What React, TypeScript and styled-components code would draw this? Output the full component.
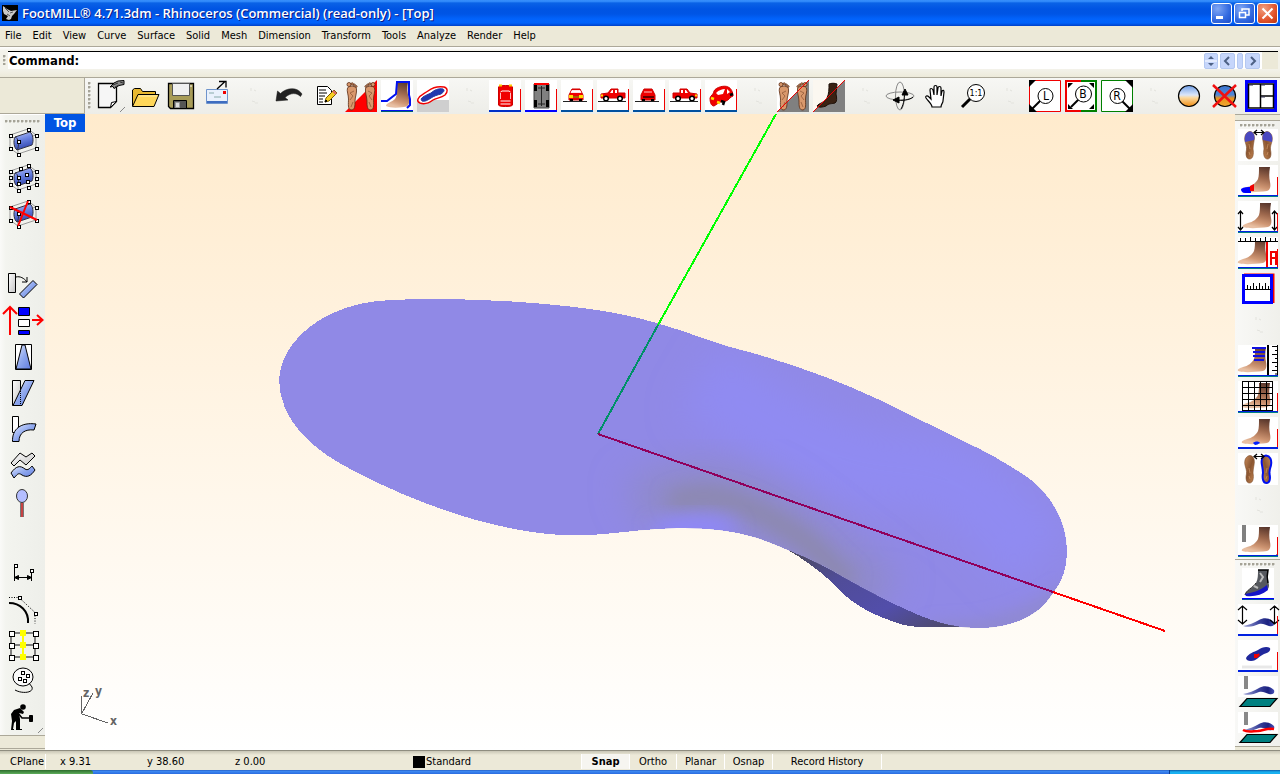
import React from "react";
import styled, { createGlobalStyle } from "styled-components";

const Global = createGlobalStyle`
  * { box-sizing: border-box; }
  body { margin: 0; background: #ece9d8; }
  button, input { font: inherit; color: inherit; border: 0; padding: 0; margin: 0; background: none; }
`;

const ui = `"DejaVu Sans Condensed", "DejaVu Sans", sans-serif`;

const Window = styled.div`
  display: flex;
  flex-direction: column;
  min-height: 100vh;
  font-family: ${ui};
  font-stretch: condensed;
  font-size: 11px;
  color: #000;
  background: #ece9d8;
`;

const TitleBar = styled.header`
  display: flex;
  align-items: center;
  height: 26px;
  padding: 0 2px;
  gap: 4px;
  background: linear-gradient(#2f86f6 0, #3a93ff 1px, #0a62e6 3px, #0054e3 9px, #0055e5 14px, #0263fc 19px, #0062fa 23px, #0040c8 26px);
`;

const TitleText = styled.h1`
  flex: 1;
  margin: 0;
  font-family: "Open Sans", "Noto Sans", sans-serif;
  font-size: 13px;
  line-height: 24px;
  font-weight: 600;
  font-stretch: normal;
  color: #fff;
  text-shadow: 1px 1px 0 #0a1883;
  white-space: nowrap;
`;

const CaptionButton = styled.button<{ $close?: boolean }>`
  display: flex;
  width: 21px;
  height: 21px;
  margin-left: -2px;
  border: 1px solid #fff;
  border-radius: 3px;
  background: ${(p) =>
    p.$close
      ? "radial-gradient(circle at 30% 25%, #f0a080, #e2542c 60%, #b83410)"
      : "radial-gradient(circle at 30% 25%, #7fa6f4, #3269e0 60%, #1c4cc8)"};
`;

const MenuBar = styled.nav`
  display: flex;
  align-items: center;
  height: 21px;
  gap: 11px;
  padding: 0 5px 1px;
  border-bottom: 1px solid #aca899;
`;

const MenuItem = styled.button`
  line-height: 16px;
`;

const CommandRow = styled.section`
  display: flex;
  height: 31px;
  padding: 4px 2px 8px 3px;
  gap: 2px;
  background: linear-gradient(#fff 0, #f3f2ea 4px, #f3f2ea 22px, #ece9d8 31px);
  border-bottom: 1px solid #aca899;
`;

const CommandBox = styled.div`
  flex: 1;
  display: flex;
  align-items: center;
  border-top: 1px solid #000;
  background: #fff;
  font-weight: 700;
  font-size: 13px;
  line-height: 16px;
`;

const CommandLabel = styled.label`
  padding-left: 1px;
`;

const CommandInput = styled.input`
  flex: 1;
  min-width: 0;
  height: 16px;
  outline: 0;
`;

const ScrollGroup = styled.div`
  display: flex;
  align-self: stretch;
  align-items: center;
  gap: 2px;
  padding-right: 18px;
  background: linear-gradient(to left, #ece9d8 16px, #fff 16px);
`;

const ScrollButton = styled.button<{ $w: number }>`
  display: flex;
  width: ${(p) => p.$w}px;
  height: 16px;
  border: 1px solid #b4c8f0;
  border-radius: 2px;
  background: #c6d6fb;
`;

const Grip = styled.i<{ $row?: boolean }>`
  flex: none;
  ${(p) => (p.$row ? "height: 3px; margin: 0 5px;" : "width: 3px; margin: 4px 0;")}
  background-image: radial-gradient(circle at 1px 1px, #a5a397 1px, transparent 2px);
  background-size: ${(p) => (p.$row ? "4px 3px" : "3px 4px")};
`;

const TopRow = styled.section`
  display: flex;
  height: 36px;
`;

const Blank = styled.div`
  width: 85px;
  border-right: 1px solid #aca899;
  border-bottom: 1px solid #aca899;
  background: #ece9d8;
`;

const TopTools = styled.div`
  flex: 1;
  display: flex;
  background: linear-gradient(#f7f7f4, #ededE8);
  padding-left: 3px;
`;

const ToolButton = styled.button<{ $side?: boolean }>`
  flex: none;
  display: flex;
  align-items: center;
  justify-content: center;
  width: ${(p) => (p.$side ? 42 : 36)}px;
  height: 36px;
  svg { display: block; overflow: visible; }
`;

const Gap = styled.span`
  flex: none;
  display: flex;
  align-items: center;
  justify-content: center;
  width: 36px;
  height: 36px;
`;

const Main = styled.main`
  flex: 1;
  display: flex;
`;

const LeftColumn = styled.aside`
  width: 45px;
  display: flex;
  flex-direction: column;
  background: #ece9d8;
`;

const LeftTools = styled.div`
  display: flex;
  flex-direction: column;
  align-items: center;
  padding-top: 5px;
  border-top: 1px solid #fff;
  border-bottom: 1px solid #aca899;
  background: linear-gradient(to right, #fafaf8 0, #f3f4ef 6px, #eeefea 44px);
  ${Grip} { width: 36px; }
`;

const LeftFoot = styled.div`
  height: 13px;
  border-bottom: 1px solid #aca899;
`;

const RightColumn = styled.aside`
  width: 45px;
  display: flex;
  flex-direction: column;
  background: #ece9d8;
  border-top: 1px solid #aca899;
`;

const RightTools = styled.div<{ $first?: boolean }>`
  display: flex;
  flex-direction: column;
  align-items: center;
  padding-top: 3px;
  margin-top: ${(p) => (p.$first ? 5 : 0)}px;
  border-top: 1px solid #aca899;
  background: linear-gradient(to right, #f8f8f6, #f0f0eb);
  ${Grip} { width: 36px; }
  &:last-child { border-bottom: 1px solid #aca899; }
`;

const Viewport = styled.section`
  position: relative;
  flex: 1;
  min-width: 0;
  display: flex;
  background: linear-gradient(#ffebcd, #fff);
  > svg { display: block; width: 100%; height: 636px; }
`;

const ViewTab = styled.button`
  position: absolute;
  left: 0;
  top: 0;
  width: 40px;
  height: 18px;
  background: #0054e3;
  color: #fff;
  font-weight: 700;
  font-size: 13px;
  line-height: 16px;
`;

const StatusBar = styled.footer`
  display: flex;
  height: 20px;
  padding: 3px 0 1px;
  border-top: 1px solid #8f8d80;
  background: linear-gradient(#c9c6b6, #ece9d8 4px);
`;

const Cell = styled.span<{ $w?: number; $line?: boolean; $pad?: number }>`
  display: flex;
  align-items: center;
  width: ${(p) => p.$w}px;
  padding-left: ${(p) => p.$pad ?? 0}px;
  border-right: ${(p) => (p.$line ? "1px solid #fff" : "0")};
  line-height: 16px;
  white-space: nowrap;
`;

const Swatch = styled.i`
  width: 12px;
  height: 12px;
  margin-right: 1px;
  background: #000;
`;

const Toggle = styled.button<{ $w: number; $on?: boolean }>`
  width: ${(p) => p.$w}px;
  border-right: 1px solid #fff;
  line-height: 16px;
  font-weight: ${(p) => (p.$on ? 700 : 400)};
  background: ${(p) => (p.$on ? "#f6f5f0" : "transparent")};
`;

const TaskStrip = styled.div`
  display: flex;
  height: 4px;
  background: linear-gradient(#1c50b8 0, #3f8cf3 1px, #2a6be0 4px);
`;

const StartEdge = styled.i`
  width: 93px;
  background: linear-gradient(#2c6b2c, #5fae5c);
  border-radius: 0 3px 0 0;
`;

const TrayEdge = styled.i`
  width: 111px;
  margin-left: auto;
  border-left: 1px solid #0a3a90;
  background: linear-gradient(#0b5aa8, #18b0f0 2px);
`;

type Kids = { children?: React.ReactNode };
const I32 = ({ children }: Kids) => (
  <svg width="32" height="32" viewBox="0 0 32 32" fill="none" stroke="#000" aria-hidden="true">{children}</svg>
);
const I40 = ({ children }: Kids) => (
  <svg width="40" height="32" viewBox="0 0 40 32" fill="none" stroke="#000" aria-hidden="true">{children}</svg>
);

const Defs = () => (
  <svg width="0" height="0" style={{ position: "absolute" }} aria-hidden="true">
    <defs>
      <linearGradient id="skin" x1="0.9" y1="0" x2="0.6" y2="1">
        <stop offset="0" stopColor="#55342a" /><stop offset="0.45" stopColor="#9c674c" /><stop offset="0.8" stopColor="#cf9673" /><stop offset="1" stopColor="#e8bfa2" />
      </linearGradient>
      <linearGradient id="sole" x1="0" y1="0" x2="1" y2="1">
        <stop offset="0" stopColor="#c88b5a" /><stop offset="0.5" stopColor="#8a5530" /><stop offset="1" stopColor="#c98a55" />
      </linearGradient>
      <linearGradient id="steel" x1="0" y1="0" x2="1" y2="1">
        <stop offset="0" stopColor="#e4ebff" /><stop offset="0.5" stopColor="#8fa8ee" /><stop offset="1" stopColor="#5f7be0" />
      </linearGradient>
      <linearGradient id="tube" x1="0" y1="0" x2="0.3" y2="1">
        <stop offset="0" stopColor="#b8c6fa" /><stop offset="0.5" stopColor="#6a82e0" /><stop offset="1" stopColor="#3348b0" />
      </linearGradient>
      <linearGradient id="grey" x1="0" y1="0" x2="1" y2="1">
        <stop offset="0" stopColor="#fff" /><stop offset="1" stopColor="#c4c4c4" />
      </linearGradient>
      <linearGradient id="navy" x1="0" y1="0" x2="1" y2="0">
        <stop offset="0" stopColor="#a4a8d8" /><stop offset="0.5" stopColor="#3c449c" /><stop offset="0.8" stopColor="#1c2280" /><stop offset="1" stopColor="#4650b8" />
      </linearGradient>
      <linearGradient id="ball" x1="0" y1="0" x2="0" y2="1">
        <stop offset="0" stopColor="#6f9fe8" /><stop offset="0.45" stopColor="#dbe6fa" /><stop offset="0.58" stopColor="#fbd9a0" /><stop offset="1" stopColor="#f08c10" />
      </linearGradient>
      <linearGradient id="ball2" x1="0" y1="0" x2="0" y2="1">
        <stop offset="0" stopColor="#3c74cc" /><stop offset="0.45" stopColor="#4f86d8" /><stop offset="0.6" stopColor="#e8921c" /><stop offset="1" stopColor="#f0a830" />
      </linearGradient>
    </defs>
  </svg>
);

/* Small square control points used by the editing icons. */
const Pts = ({ at, s = 3 }: { at: number[][]; s?: number }) => (
  <g fill="#fff" stroke="#000" shapeRendering="crispEdges">
    {at.map(([x, y]) => <rect key={`${x}-${y}`} x={x - (s - 1) / 2} y={y - (s - 1) / 2} width={s} height={s} />)}
  </g>
);

const RED = "#f00000";
const BLUE = "#0000ff";

const Marks = () => (
  <I32><path d="M14 8v3M17 10l2 1M15 21l3 1M18 23h3" stroke="#e2e2dd" /></I32>
);

const NewDoc = () => (
  <I32>
    <path d="M5.500 3.500h18v18l-6 6h-12z" fill="#f6f6f6" strokeWidth="1.300" /><path d="M17.500 27.500l1-5 5-1z" fill="#fff" />
    <path d="M17 7l4-4 4-2 6-.5v4l-5 1-5 3-1-2z" fill="#8c8c8c" /><path d="M20 5l5-2m-3 4 4-2M27 2l3 1" stroke="#333" />
    <path d="M27 32l5-5" stroke="#888" />
  </I32>
);
const OpenFolder = () => (
  <I32>
    <path d="M3.500 26V10l2-1.500h6l2 3h13v4" fill="#e8b830" />
    <path d="M3.500 26.500L9 14.500h21l-5 12z" fill="#ffd75a" /><path d="M10 16h18" stroke="#ffefb0" />
  </I32>
);
const Floppy = () => (
  <I32>
    <path d="M3.500 3.500h25v25h-23l-2-2z" fill="#a89c58" strokeWidth="1.300" /><path d="M7.500 3.500h17v12h-17z" fill="#f0f0f0" stroke="#555" />
    <path d="M8.500 20.500h13v8h-13z" fill="#555" /><path d="M10.500 22.500h4v5h-4z" fill="#ddd" stroke="#999" /><path d="M26 5v2" stroke="#fff" />
  </I32>
);
const Mail = () => (
  <I32>
    <path d="M5.500 9.500h21v14h-21z" fill="#e9f1fc" stroke="#6f94cc" /><path d="M6 22h20" stroke="#3d6cc0" strokeWidth="2" />
    <path d="M8 13h5M13 17h7" stroke="#8aa" /><path d="M22 11h3v3h-3z" fill={RED} stroke="none" />
    <path d="M16 9l8-7.500M18 1.500h7v6" strokeWidth="1.300" />
  </I32>
);
const Undo = () => (
  <I32><path d="M3 21l1.500-10 3 2.500C13 8 24 6 29 14l-1.500 2.500c-4-4-10-4-15.500 1l3 2.500z" fill="#222" stroke="#111" strokeWidth=".5" /></I32>
);
const Notes = () => (
  <I32>
    <path d="M8.500 6.500h10l4 4v14h-14z" fill="#fff" /><path d="M10 10h7M10 13h8M10 16h6M10 19h4M10 22h4" /><path d="M16 22l1-4 8-8 3 3-8 8z" fill="#f7cf20" stroke="#7a5a00" />
    <path d="M24 11l3 3" stroke="#d66" strokeWidth="2" /><path d="M16 22l1-2 1 1z" fill="#000" />
  </I32>
);

const Sole = ({ x = 0, flip = false, tip = "", outline = "" }: { x?: number; flip?: boolean; tip?: string; outline?: string }) => (
  <g transform={flip ? `translate(${x + 10} 0) scale(-1 1)` : `translate(${x} 0)`}>
    <path d="M1 12C0 7 2 3 6 2.500c4 .5 5 5 4 9.500-.5 3-1 5-1 8 1 5 0 10-3.500 10S1.500 25 2.500 21C3 17 1.500 15 1 12z" fill="url(#sole)" stroke={outline || "#7a4a28"} strokeWidth={outline ? 2 : 0.6} />
    {tip && <path d="M1 13C0 7 2 3 6 2.500c4 .5 5 5 4.200 8.500z" fill={tip} stroke="none" />}
    <path d="M5 15l1 5M5 23l1 3" stroke="#d9a070" opacity=".6" />
  </g>
);
const Toes = ({ x, flip = false }: { x: number; flip?: boolean }) => (
  <g transform={flip ? `translate(${x + 12} 0) scale(-1 1)` : `translate(${x} 0)`} stroke="#5a2c14" strokeWidth=".8">
    <path d="M1.500 9c0-3 7-4 9-1 1 3-1 7-1 11 0 5 1 10-2.500 11-4 0-4-4-4-9 0-4-2-8-1.500-12z" fill="#d9986c" />
    <circle cx="9" cy="4.500" r="2" fill="#d9986c" /><circle cx="5.800" cy="4" r="1.200" fill="#d9986c" /><circle cx="3.600" cy="5" r="1" fill="#d9986c" /><circle cx="1.800" cy="6.500" r=".9" fill="#d9986c" />
    <path d="M4 11l4 2-3 3 3 4M5 22l2 5" stroke="#935a38" />
  </g>
);
const FeetRed = () => (
  <I32><path d="M0 32L32 0v32z" fill="#f00" stroke="none" /><Toes x={1} flip /><Toes x={19} /></I32>
);
const FootBlue = () => (
  <I32>
    <path d="M0 0h32v32H0z" fill="#fff" stroke="none" />
    <path d="M16 2h11c-1 6-1 11 1 16 1 6-1 9-5 9-7 1-14 1-18-1 0-3 6-4 9-7 3-4 2-12 2-17z" fill="url(#skin)" stroke="none" />
    <path d="M0 21h6l9-7 1-12h12v13l1 4v6l-3 3" stroke="#0010f0" strokeWidth="2" /><path d="M0 30.500h32" stroke="#0010f0" /><path d="M0 31.500h32" stroke="#006070" />
  </I32>
);
const InsoleRed = () => (
  <I32>
    <path d="M0 0h32v20H0z" fill="#fff" stroke="none" /><path d="M0 20h32v12H0z" fill="#cfcfcf" stroke="none" />
    <path d="M1 19c2-4 6-5 10-8 4-3 10-5 16-4 4 1 4 5 1 8-4 3-9 3-12 5-4 3-8 5-13 3-2-1-3-2-2-4z" fill="#fff" stroke={RED} strokeWidth="1.400" />
    <path d="M4 19c2-3 6-4 10-6 3-3 8-5 12-4 2 1 1 3-2 5-4 1-7 2-10 4-3 2-6 4-9 3z" fill="#2038b0" stroke="#2a3aa0" />
  </I32>
);

const CarCard = ({ children, line = "#0050a0" }: Kids & { line?: string }) => (
  <I32>
    <path d="M0 0h32v32H0z" fill="#fff" stroke="none" />{children}
    <path d="M31.500 9v21" stroke={RED} /><path d="M0 31h32" stroke={line} strokeWidth="2" />
  </I32>
);
const CarTop = () => (
  <CarCard line="#0030c8">
    <path d="M9.500 7c0-2 14-2 14 0v18c0 2-14 2-14 0z" fill={RED} stroke="#c00" />
    <path d="M11.500 12l1.500-1h7l1.500 1M11.500 21h10M11.500 24h10" stroke="#fff" /><path d="M11.500 13v6M21.500 13v6" stroke="#fbb" />
    <path d="M10 5.500h3M20 5.500h3" stroke="#fc0" strokeWidth="2" />
  </CarCard>
);
const CarUnder = () => (
  <CarCard line="#0000ff"><path d="M9 4h15v24H9z" fill="#808080" stroke="#444" /><path d="M9 4h15" stroke="#f00" strokeWidth="2" /><path d="M10.500 5v6M22.500 5v6M10.500 20v7M22.500 20v7" strokeWidth="3" /><path d="M16.500 6v20M13 8h7M13 24h7" stroke="#222" /></CarCard>
);
const CarFace = ({ back = false }: { back?: boolean }) => (
  <CarCard>
    <g transform="translate(-1 -1)">
      <path d="M10 14l2-4h8l2 4 1 2v5H9v-5z" fill={RED} stroke="#c00" />
      <path d={back ? "M12 13h8" : "M11 13.500h10l-1-2h-8z"} fill="#fff" stroke="#fff" strokeWidth=".8" /><path d="M11 18h11" stroke={back ? "#600" : "#a86000"} strokeWidth="2" />
      {!back && <path d="M9 16h4v3H9zM19 16h4v3h-4z" fill="#fd0" stroke="none" />}
      <path d="M10 21h3M19 21h3" strokeWidth="2" />
    </g>
    <path d="M2 21.500h24" stroke="#222" />
  </CarCard>
);
const CarSide = ({ flip = false }: { flip?: boolean }) => (
  <CarCard>
    <g transform={flip ? "translate(32 0) scale(-1 1)" : undefined}>
      <path d="M4 18v-4l7-1 3-4h7v4h7v5z" fill={RED} stroke="#c00" /><path d="M13 13l2-3h1v3zM18 10h2v3h-2z" fill="#fff" stroke="none" />
      <circle cx="9" cy="18.500" r="2.300" fill="#fff" strokeWidth="1.500" /><circle cx="23" cy="18.500" r="2.300" fill="#fff" strokeWidth="1.500" /><path d="M4 15.500h2" stroke="#fd0" strokeWidth="2" />
    </g>
    <path d="M1 21.500h28" stroke="#222" />
  </CarCard>
);
const CarTilt = () => (
  <CarCard>
    <path d="M5 18c1-3 4-4 4-7 2-4 11-6 14-4 3 1 5 5 5 9-3 1-4 4-7 5l-6 1-6 4c-3 0-4-4-4-8z" fill={RED} stroke="#c00" />
    <path d="M11 13c3-3 6-4 9-4l-2 5-5 1zM22 9l3 3-3 2z" fill="#fff" stroke="none" /><path d="M6 18l3 1M12 22l3 1" stroke="#fd0" strokeWidth="2.500" /><path d="M16 21l3 1-1 3M25 15l3-1" strokeWidth="2.500" />
  </CarCard>
);
const FeetGrey = () => (
  <I32><path d="M0 0h32v32H0z" fill="#fff" stroke="none" /><path d="M0 32L32 0v32z" fill="#808080" stroke="none" /><Toes x={1} flip /><Toes x={19} /><path d="M0 32L32 0" stroke={RED} /></I32>
);
const DarkFoot = () => (
  <I32>
    <path d="M0 0h32v32H0z" fill="#fbf7f0" stroke="none" /><path d="M0 32L32 0v32z" fill="#808080" stroke="none" />
    <path d="M16 4c2-1 6-1 8 0l-1 10c1 4 1 8-1 9-3 1-6 0-9 3-3 1-7 2-9 0 2-3 7-3 10-8 2-4 2-9 2-14z" fill="#3a2112" stroke="#1c0e06" /><path d="M0 32L32 0" stroke={RED} />
  </I32>
);
const Orbit = () => (
  <I32>
    <ellipse cx="15" cy="16" rx="14" ry="4" stroke="#888" /><ellipse cx="15" cy="16" rx="4.500" ry="14" stroke="#888" />
    <path d="M11 20c6 1 14 0 17-3M19 11c1 5 0 13-3 18" /><path d="M8 20l6-3v6zM20 9l-3 6 6 0z" fill="#000" />
  </I32>
);
const Hand = () => (
  <I32>
    <path d="M11 27c0-3-4-6-6-9-1-2 1-3 3-1l2 2-1-9c0-2 2-2 3 0l1 5V7c0-2 3-2 3 0v8l1-7c0-2 3-2 3 0v8l1-5c1-1 2-1 2 1l-1 9c0 2-2 3-2 6z" fill="#fff" strokeWidth="1.200" />
  </I32>
);
const Label = ({ x, y, size, children, color = "#000" }: { x: number; y: number; size: number; children: string; color?: string }) => (
  <text x={x} y={y} fontSize={size} fontFamily={ui} textAnchor="middle" fill={color} stroke="none">{children}</text>
);
const ZoomOne = () => (
  <I32><path d="M5 27l8-8" strokeWidth="3" /><circle cx="19" cy="13" r="8.500" fill="#fff" /><Label x={19} y={16} size={9}>1:1</Label></I32>
);
const ZoomL = () => (
  <I32><path d="M.5.500h31v31H.5z" fill="#fff" stroke={RED} /><path d="M0 0h7L0 7zM0 32v-8l8 8z" fill="#000" stroke="none" /><path d="M3 29l8-8" strokeWidth="2" /><circle cx="16.500" cy="16" r="7.500" fill="#fff" /><Label x={17} y={20} size={12}>L</Label></I32>
);
const ZoomB = () => (
  <I32><path d="M0 0h32v32H0z" fill="#fff" stroke="none" /><path d="M16 1H1v30h15" stroke={RED} strokeWidth="2" /><path d="M16 1h15v30H16" stroke="#008000" strokeWidth="2" /><path d="M3 3h5L3 8zM29 3v5l-5-5zM3 29v-5l5 5zM29 29h-5l5-5z" fill="#000" stroke="none" /><path d="M6 27l8-8" strokeWidth="2" /><circle cx="18.500" cy="14" r="8" fill="#fff" /><Label x={18} y={18} size={12}>B</Label></I32>
);
const ZoomR = () => (
  <I32><path d="M.5.500h31v31H.5z" fill="#fff" stroke="#008000" /><path d="M24 0h8v8zM32 32v-8l-8 8z" fill="#000" stroke="none" /><path d="M29 29l-8-8" strokeWidth="2" /><circle cx="16.500" cy="16" r="7.500" fill="#fff" /><Label x={16} y={20} size={12}>R</Label></I32>
);
const Shade = () => <I32><circle cx="16" cy="16" r="10.500" fill="url(#ball)" strokeWidth="1.200" /></I32>;
const ShadeOff = () => (
  <I32><circle cx="16" cy="16" r="10.500" fill="url(#ball2)" strokeWidth="1.200" /><path d="M4 5l23 22M27 5L4 27" stroke="#f01010" strokeWidth="2.500" /></I32>
);
const Panes = () => (
  <I32><path d="M1.500 1.500h29v29h-29z" fill="#fff" stroke={BLUE} strokeWidth="3" /><path d="M3.500 4h25v24h-25zM15.500 4v24M15.500 16h13" strokeWidth="1.500" /><path d="M4 5h4M16 5h4M16 17h4" stroke="#335" /></I32>
);

const boxPts = [[21, 4], [3, 10], [29, 10], [3, 23], [29, 23], [11, 29], [11, 16]];
const Cage = () => (
  <>
    <path d="M3 10l18-6 8 6v13l-18 6-8-6zM3 10l8 6 18-6M11 16v13" stroke="#999" />
    <path d="M8 12l15-5c3 2 4 9 2 13l-15 5c-3-2-4-9-2-13z" fill="url(#tube)" stroke="#334" /><path d="M8 12c3 0 5 9 2 13" stroke="#334" />
  </>
);
const PointsOn = () => <I32><Cage /><Pts at={boxPts} /></I32>;
const PointsMore = () => <I32><Cage /><Pts at={[...boxPts, [13, 7], [19, 13], [3, 16], [29, 17], [20, 20], [21, 26], [11, 22]]} /></I32>;
const PointsOff = () => <I32><Cage /><Pts at={boxPts} /><path d="M3 10l27 13M21 4L11 29" stroke="#f00" strokeWidth="2" /></I32>;
const Rotate = () => (
  <I32><path d="M1.500 4.500h7v19h-7z" fill="url(#grey)" /><path d="M9 8c4-1 8 1 11 5M20 8v5h-5" /><path d="M12.500 25L26 11.500l4 4L16.500 29z" fill="url(#steel)" /></I32>
);
const Move = () => (
  <I32>
    <path d="M3 30V2M-4 9l7-7 7 7" stroke="#f00" strokeWidth="2" /><path d="M25 15h11M30 10l5.500 5-5.500 5" stroke="#f00" strokeWidth="2" />
    <path d="M11.500 2.500h11v8h-11zM11.500 25.500h11v4h-11z" fill={BLUE} /><path d="M11.500 14.500h11v7h-11z" fill="#fff" />
  </I32>
);
const Taper = () => <I32><path d="M8.500 3.500h16v25h-16z" fill="#fff" /><path d="M15 4h3l6 24H9z" fill="url(#steel)" /></I32>;
const Shear = () => <I32><path d="M5.500 3.500h8v25h-8z" fill="url(#grey)" /><path d="M6 28.500l12-25h9l-12 25z" fill="url(#steel)" /><path d="M13.500 14v14" strokeDasharray="1 1" /></I32>;
const Bend = () => <I32><path d="M5.500 3.500h6v16h-6z" fill="#fff" /><path d="M5.500 28.500C5 16 14 9 29 11l-2 6c-9-1-15 3-15 11.500z" fill="url(#steel)" /></I32>;
const Flow = () => (
  <I32>
    <path d="M4 14l9-10 6 4 6-4 3 3-9 9-6-5-6 6z" fill="url(#grey)" />
    <path d="M4 24c5-7 9-8 14-4 3 2 5-1 7-3l3 4c-4 6-8 8-13 5-4-3-5 0-8 3z" fill="url(#steel)" />
  </I32>
);
const Pin = () => <I32><path d="M15 18v14" stroke="#777" strokeWidth="4" /><path d="M15 18v14" stroke="#e03030" strokeWidth="1.500" /><ellipse cx="15" cy="11" rx="5.500" ry="6.500" fill="#b4beff" stroke="#333" /></I32>;
const Dim = () => <I32><path d="M7.500 10v14M24.500 16v8M8 20.500h16" /><path d="M7.500 20.500l4-2v4zM24.500 20.500l-4-2v4z" fill="#000" /><Pts at={[[8, 8], [24, 13]]} /></I32>;
const Curve = () => <I32><path d="M2 10c11 0 20 8 19 20" strokeWidth="2" /><path d="M2 4.500h10l16 15v11" strokeDasharray="1 1.500" /><Pts at={[[12, 4], [28, 20]]} /></I32>;
const Grid9 = () => (
  <I32>
    <path d="M4 4h24v24H4zM4 16h24" stroke="#808080" strokeWidth="2" /><path d="M16 4v24" stroke="#ff0" strokeWidth="2" />
    <Pts s={5} at={[[4, 4], [28, 4], [4, 16], [28, 16], [4, 28], [28, 28]]} />
    <path d="M13 1h6v6h-6zM13 13h6v6h-6zM13 25h6v6h-6z" fill="#ff0" stroke="none" />
  </I32>
);
const Palette = () => <I32><ellipse cx="16" cy="12" rx="10" ry="9" fill="#fafafa" /><path d="M22 18l3 4c2 6-10 7-17 3" /><Pts at={[[15, 7], [20, 10], [12, 13], [17, 15]]} /></I32>;
const Worker = () => (
  <I32>
    <circle cx="16" cy="6" r="2.800" fill="#000" stroke="none" />
    <path d="M4 13l3-4 6-2 4 4-1 2-4-1 1 6v10h2v1h-6v-9l-2 2-1 6h1v1H4l1-9z" fill="#000" stroke="none" />
    <path d="M11 12l4 5h8" strokeWidth="1.500" /><path d="M22.500 14.500h3v6h-3z" fill="#000" /><path d="M31 32l5-5" stroke="#888" />
  </I32>
);

/* Side view of the foot on the wide icons, with its card and underline. */
const Foot = ({ x = 0 }: { x?: number }) => (
  <path transform={`translate(${x} 0)`} d="M21 2h11c-1 6-1 10 0 15 1 5 0 8-3 9-8 1-19 2-25 0-1-2 2-3 5-4 5-1 9-4 11-8 1-3 1-8 1-12z" fill="url(#skin)" stroke="none" />
);
const Card = ({ children, bar = true, line = "#008080" }: Kids & { bar?: boolean; line?: string }) => (
  <I40>
    <path d="M0 0h40v32H0z" fill="#fff" stroke="none" />{children}
    {bar && <path d="M39.500 12v19" stroke={RED} />}
    {line && <path d="M0 30.500h40" stroke="#0020e0" />}
    {line && <path d="M0 31.500h40" stroke={line} />}
  </I40>
);
const Arrows = ({ d }: { d: string }) => <path d={d} strokeWidth="1.200" />;
const hArrow = "M16 3.500h10M19 1l-3 2.500 3 2.500M23 1l3 2.500-3 2.500";
const SolesTip = () => <Card bar={false} line=""><Sole x={6} tip="#4a48c0" /><Sole x={25} tip="#4a48c0" flip /><Arrows d={hArrow} /></Card>;
const ToeCap = () => <Card><Foot /><path d="M3 24c3-2 6-2 10-2v6H7c-3 0-4-2-4-4z" fill={BLUE} stroke="none" /><path d="M12 21l4-2v7h-4z" fill={RED} stroke="none" /></Card>;
const FootHeight = () => <Card><Foot x={1} /><Arrows d="M2.500 10v19M0 13l2.500-3L5 13M0 26l2.500 3L5 26M36.500 10v19M34 13l2.500-3 2.500 3M34 26l2.500 3 2.500-3" /></Card>;
const FootRuler = () => (
  <Card><Foot x={-4} /><path d="M0 0h40v5H0z" fill="#fff" stroke="none" /><path d="M0 4.500h40M2.500 1v3M7.500 1v3M12.500 0v4M17.500 1v3M22.500 1v3M27.500 0v4M32.500 1v3M37.500 1v3" /><path d="M29 5v25" stroke={RED} strokeWidth="2" />
    <path d="M33 28V15h5v13M33 21h5" stroke={RED} strokeWidth="2" /></Card>
);
const RulerBox = () => (
  <I40><path d="M6 1.500h29.500V30" stroke={RED} strokeWidth="2" /><path d="M5.500 2.500h28v27h-28z" fill="#fff" stroke={BLUE} strokeWidth="3" /><path d="M7 16.500h26M9.500 12v4M12.500 13v3M15.500 10v6M18.500 13v3M21.500 10v6M24.500 13v3M27.500 10v6M30.500 13v3" /></I40>
);
const FootBands = () => (
  <Card bar={false}><Foot x={-4} /><path d="M14 3h14M15 7h12M15 11h12M16 15h10" stroke="#1010e0" strokeWidth="2" /><path d="M30 0v30" strokeWidth="2" /><path d="M39.500 0v30M34 1.500h6M37 5.500h3M34 9.500h6M37 13.500h3M34 17.500h6M37 21.500h3M34 25.500h6M37 29h3" /></Card>
);
const FootGrid = () => (
  <Card><Foot /><g shapeRendering="crispEdges"><path d="M4.500.5h30v29h-30zM10.500 0v30M16.500 0v30M22.500 0v30M28.500 0v30M4 6.500h31M4 12.500h31M4 18.500h31M4 24.500h31" /></g></Card>
);
const FootSpot = () => <Card line="#0020e0"><Foot /><path d="M15 26c2-2 6-2 7 0-2 1-3 2-5 2z" fill="#0020ff" stroke="none" /></Card>;
const SolesOutline = () => <Card bar={false} line=""><Sole x={6} /><Sole x={24} flip outline="#0010f0" /><Arrows d={hArrow} /></Card>;
const FootProbe = () => <Card><Foot /><path d="M6 0v17" stroke="#808080" strokeWidth="4" /><path d="M36 32l4-4" stroke="#888" /></Card>;
const ScanFoot = () => (
  <I40>
    <path d="M4 0h32v31H4z" fill="#fff" stroke="none" /><path d="M20 2h10c-1 5 0 11 1 15 0 5-3 6-7 7-5 2-10 4-17 3 1-5 8-6 11-12 2-4 2-8 2-13z" fill="#55585e" stroke="none" />
    <path d="M20 2h10c-1 4-1 9 0 13" strokeWidth="1.500" /><path d="M7 27c1-5 8-7 11-12" stroke="#222" />
    <path d="M7 26c6-1 15-3 22-9l1 5c-6 5-14 7-22 6z" fill="#1414c8" stroke="none" /><path d="M22 5l3 4-3 5M16 18l4 2" stroke="#bbb" strokeWidth="2" /><path d="M4 30.500h32" stroke={BLUE} /><path d="M4 31.500h32" stroke="#0050a0" />
  </I40>
);
const Arch = ({ y = 0 }: { y?: number }) => (
  <path transform={`translate(0 ${y})`} d="M5 22c6-1 11-3 16-6 5-3 11-2 15 2 1 3-1 5-5 4-4-1-6-3-10-2-5 2-10 4-16 2z" fill="url(#navy)" stroke="none" />
);
const InsoleHeight = () => <Card line="#0020e0"><Arch /><Arrows d="M4.500 2v18M0 6l4.500-4L9 6M0 16l4.500 4L9 16M36.500 2v18M32 6l4.500-4L41 6M32 16l4.500 4 4.500-4" /></Card>;
const InsoleDot = () => (
  <Card line="#0020e0"><path d="M8 18c3-5 8-6 12-8 4-3 9-4 12-2 1 3-2 5-6 6-5 2-7 7-13 7-3 0-5-1-5-3z" fill="#20289c" stroke="none" /><path d="M16 14h4v-1l2 2-3 3h-3z" fill={RED} stroke="none" /><path d="M4 27h30" stroke="#e8e8e8" strokeWidth="3" /></Card>
);
const InsoleMill = ({ cut = false }: { cut?: boolean }) => (
  <I40>
    <path d="M0 0h40v21H0z" fill="#fff" stroke="none" /><path d="M8 0v13" stroke="#888" strokeWidth="4" /><Arch y={-4} />
    {cut && <path d="M5 18c5 3 10 1 15 1 6-1 10-3 16-2" stroke="#f00" strokeWidth="2.500" />}
    <path d="M9 22.500h30l-7 8H2z" fill="#008080" strokeWidth="1.200" />
  </I40>
);

type Tool = [string, React.ReactElement] | null;
const topTools: Tool[] = [
  ["New", <NewDoc />], ["Open", <OpenFolder />], ["Save", <Floppy />], ["Send", <Mail />], null,
  ["Undo", <Undo />], ["Notes", <Notes />], ["Import feet", <FeetRed />], ["Import foot", <FootBlue />], ["Import insole", <InsoleRed />], null,
  ["Top view", <CarTop />], ["Bottom view", <CarUnder />], ["Front view", <CarFace />], ["Left view", <CarSide />], ["Back view", <CarFace back />],
  ["Right view", <CarSide flip />], ["Perspective view", <CarTilt />], null,
  ["Toggle feet", <FeetGrey />], ["Toggle cast", <DarkFoot />], null,
  ["Rotate view", <Orbit />], ["Pan", <Hand />], ["Zoom 1:1", <ZoomOne />], null,
  ["Zoom left", <ZoomL />], ["Zoom both", <ZoomB />], ["Zoom right", <ZoomR />], null,
  ["Shade", <Shade />], ["Shade off", <ShadeOff />], ["Four views", <Panes />],
];
const leftTools: Tool[] = [
  ["Points on", <PointsOn />], ["Edit points", <PointsMore />], ["Points off", <PointsOff />], null,
  ["Rotate", <Rotate />], ["Move", <Move />], ["Taper", <Taper />], ["Shear", <Shear />], ["Bend", <Bend />], ["Flow", <Flow />], ["Drill", <Pin />], null,
  ["Dimension", <Dim />], ["Curve", <Curve />], ["Cage edit", <Grid9 />], ["Lasso", <Palette />], ["Work", <Worker />],
];
const footTools: Tool[] = [
  ["Mirror tips", <SolesTip />], ["Toe cap", <ToeCap />], ["Foot height", <FootHeight />], ["Measure A", <FootRuler />], ["Ruler", <RulerBox />], null,
  ["Sections", <FootBands />], ["Foot grid", <FootGrid />], ["Arch spot", <FootSpot />], ["Mirror outline", <SolesOutline />], null, ["Probe foot", <FootProbe />],
];
const insoleTools: Tool[] = [
  ["Scan", <ScanFoot />], ["Insole height", <InsoleHeight />], ["Insole centre", <InsoleDot />], ["Mill top", <InsoleMill />], ["Mill cut", <InsoleMill cut />],
];

const Tools = ({ list, side, plain }: { list: Tool[]; side?: boolean; plain?: boolean }) => (
  <>
    {list.map((t, i) =>
      t ? <ToolButton key={i} $side={side} aria-label={t[0]}>{t[1]}</ToolButton> : <Gap key={i}>{!plain && <Marks />}</Gap>
    )}
  </>
);

const outline =
  "M279 380C281 340 325 304 385 300.500C450 296 560 302 620 314C665 323 700 338 730 347C785 361 835 379 882 401C915 417 940 430 963 441C980 449 992 455 1003 462C1020 472 1033 480 1042 490C1058 508 1067 528 1067 552C1067 568 1062 582 1053 593C1044 607 1034 614 1023 619C1010 625 995 628 978 628C955 628 935 622 916 614C893 604 868 591 845 578C825 566 810 559 793 552C780 547 768 541 754 537C735 531 710 528 685 528C640 528 615 535 575 535.500C510 535 430 510 360 474C310 450 280 420 279 380Z";

const Scene = () => (
  <svg viewBox="45 114 1190 636" role="img" aria-label="Insole surface, top view">
    <defs>
      <clipPath id="body"><path d={outline} /></clipPath>
      <filter id="soft" x="-50%" y="-50%" width="200%" height="200%"><feGaussianBlur stdDeviation="18" /></filter>
      <filter id="mid" x="-50%" y="-50%" width="200%" height="200%"><feGaussianBlur stdDeviation="9" /></filter>
      <linearGradient id="under" x1="0" y1="0" x2="1" y2="0.700">
        <stop offset="0" stopColor="#4c4a58" /><stop offset="0.350" stopColor="#504c98" /><stop offset="0.700" stopColor="#524eaa" /><stop offset="1" stopColor="#4e4a70" />
      </linearGradient>
    </defs>
    <path d="M788 550C800 557 815 567 833 583C850 603 870 615 904 625C915 628 935 627 980 627L916 605L845 570Z" fill="url(#under)" shapeRendering="crispEdges" />
    <path d={outline} fill="#9089e6" shapeRendering="crispEdges" />
    <g clipPath="url(#body)">
      <path d="M700 380C770 420 830 470 900 470S1000 520 1040 560" stroke="#908bf2" strokeWidth="76" fill="none" filter="url(#soft)" />
      <path d="M640 512C690 480 740 490 790 530S850 575 880 600" stroke="#8f8ac8" strokeWidth="60" fill="none" filter="url(#soft)" />
      <path d="M670 503C710 486 745 503 785 527S815 555 850 582" stroke="#8c88ac" strokeWidth="18" fill="none" filter="url(#mid)" />
      <ellipse cx="694" cy="527" rx="44" ry="11" fill="#8f88fa" filter="url(#mid)" />
      <path d="M930 632C980 634 1020 626 1070 592" stroke="#8f89c8" strokeWidth="14" fill="none" filter="url(#mid)" />
    </g>
    <g strokeWidth="2" shapeRendering="crispEdges">
      <path d="M776 114L658 325" stroke="#00ff00" /><path d="M658 325L598 434" stroke="#009068" />
      <path d="M598 434L1053 592" stroke="#90005c" /><path d="M1053 592L1165 631" stroke="#ff0000" />
    </g>
    <g stroke="#646464" fill="none" shapeRendering="crispEdges"><path d="M81.500 696v18L93 693M82 714l26 9" /></g>
    <g fill="#646464" fontFamily="DejaVu Sans, sans-serif" fontSize="12" fontWeight="700"><text x="83" y="697">z</text><text x="95" y="695">y</text><text x="110" y="725">x</text></g>
  </svg>
);

const menus = ["File", "Edit", "View", "Curve", "Surface", "Solid", "Mesh", "Dimension", "Transform", "Tools", "Analyze", "Render", "Help"];

export default function App() {
  return (
    <Window>
      <Global />
      <Defs />
      <TitleBar>
        <svg width="16" height="16" viewBox="0 0 16 16" aria-hidden="true">
          <path d="M0 0h16v16H0z" fill="#000" /><path d="M1 1l4 3 4 2 6-1-3 4-2 2-1 3-2 1-3-1 2-3-4-2-1-3z" fill="#c8c8c8" /><path d="M3 3l4 4M8 8l3-1M5 9l3 2" stroke="#555" />
        </svg>
        <TitleText>FootMILL® 4.71.3dm - Rhinoceros (Commercial) (read-only) - [Top]</TitleText>
        <CaptionButton aria-label="Minimize"><svg width="19" height="19" viewBox="0 0 19 19"><path d="M4 13.500h7" stroke="#fff" strokeWidth="3" /></svg></CaptionButton>
        <CaptionButton aria-label="Restore"><svg width="19" height="19" viewBox="0 0 19 19" fill="none" stroke="#fff"><path d="M7 7V5h7v6h-3" strokeWidth="1.500" /><path d="M4.500 8.500h6v5h-6z" strokeWidth="1.500" /></svg></CaptionButton>
        <CaptionButton $close aria-label="Close"><svg width="19" height="19" viewBox="0 0 19 19"><path d="M4.500 4.500l10 10M14.500 4.500l-10 10" stroke="#fff" strokeWidth="2" /></svg></CaptionButton>
      </TitleBar>
      <MenuBar>{menus.map((m) => <MenuItem key={m}>{m}</MenuItem>)}</MenuBar>
      <CommandRow>
        <Grip />
        <CommandBox>
          <CommandLabel htmlFor="cmd">Command:</CommandLabel>
          <CommandInput id="cmd" />
          <ScrollGroup>
            <ScrollButton $w={14} aria-label="History"><svg width="12" height="14" viewBox="0 0 12 14"><path d="M3 5l3-3 3 3zM3 9l3 3 3-3z" fill="#4d6185" /><path d="M0 7h12" stroke="#fff" /></svg></ScrollButton>
            <ScrollButton $w={15} aria-label="Scroll left"><svg width="13" height="14" viewBox="0 0 13 14"><path d="M8 3L4 7l4 4" fill="none" stroke="#4d6185" strokeWidth="2" /></svg></ScrollButton>
            <ScrollButton $w={6} aria-label="Scroll thumb" />
            <ScrollButton $w={15} aria-label="Scroll right"><svg width="13" height="14" viewBox="0 0 13 14"><path d="M5 3l4 4-4 4" fill="none" stroke="#4d6185" strokeWidth="2" /></svg></ScrollButton>
          </ScrollGroup>
        </CommandBox>
      </CommandRow>
      <TopRow>
        <Blank />
        <TopTools><Grip /><Tools list={topTools} /></TopTools>
      </TopRow>
      <Main>
        <LeftColumn>
          <LeftTools><Grip $row /><Tools list={leftTools} plain /></LeftTools>
          <LeftFoot />
        </LeftColumn>
        <Viewport>
          <Scene />
          <ViewTab>Top</ViewTab>
        </Viewport>
        <RightColumn>
          <RightTools $first><Grip $row /><Tools list={footTools} side /></RightTools>
          <RightTools><Grip $row /><Tools list={insoleTools} side /></RightTools>
        </RightColumn>
      </Main>
      <StatusBar>
        <Cell $w={46} $pad={10} $line>CPlane</Cell>
        <Cell $w={101} $pad={14}>x 9.31</Cell>
        <Cell $w={88}>y 38.60</Cell>
        <Cell $w={178}>z 0.00</Cell>
        <Cell $w={169} $line><Swatch />Standard</Cell>
        <Toggle $w={48} $on>Snap</Toggle>
        <Toggle $w={47}>Ortho</Toggle>
        <Toggle $w={48}>Planar</Toggle>
        <Toggle $w={48}>Osnap</Toggle>
        <Toggle $w={109}>Record History</Toggle>
      </StatusBar>
      <TaskStrip><StartEdge /><TrayEdge /></TaskStrip>
    </Window>
  );
}
